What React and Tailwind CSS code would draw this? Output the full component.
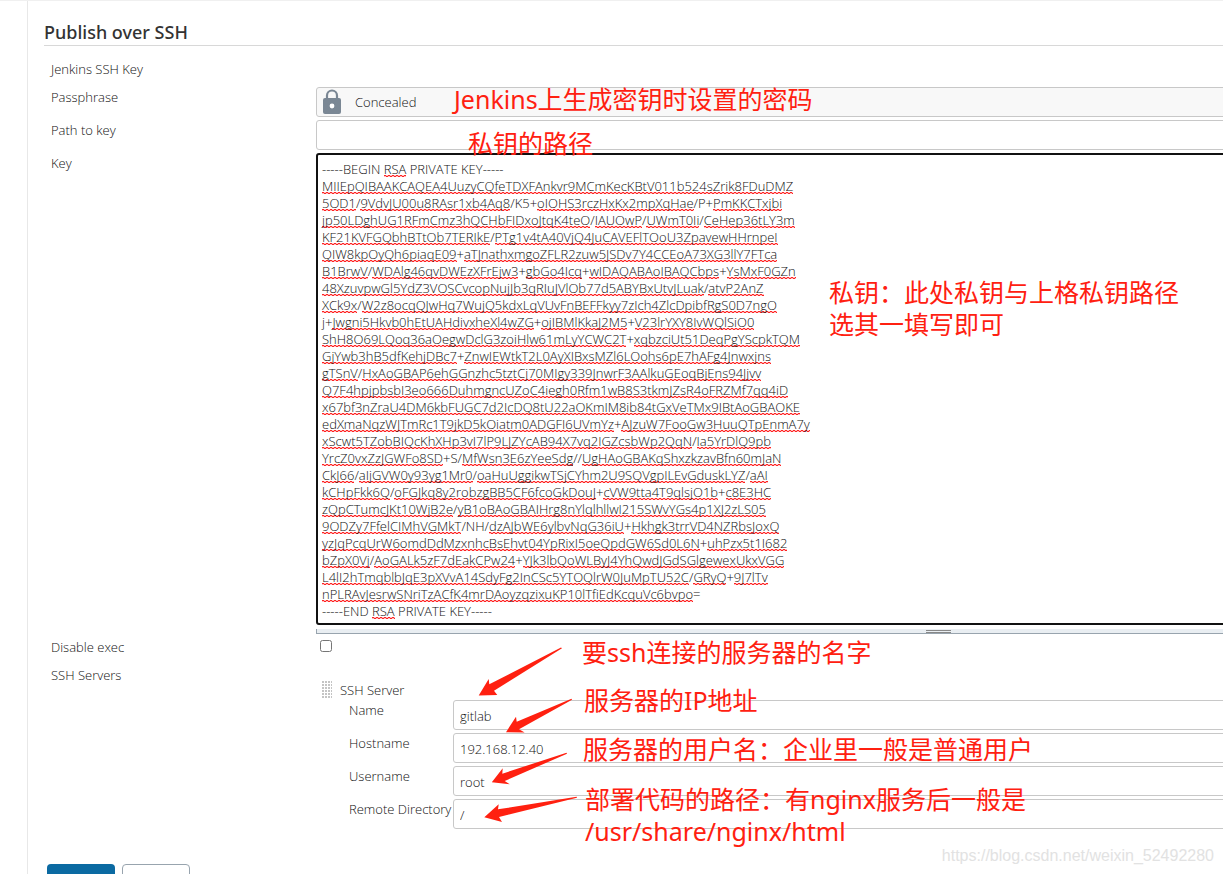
import React from "react";

const KEY_TEXT = `-----BEGIN RSA PRIVATE KEY-----
MIIEpQIBAAKCAQEA4UuzyCQfeTDXFAnkvr9MCmKecKBtV011b524sZrik8FDuDMZ
5OD1/9VdvJU00u8RAsr1xb4Aq8/K5+oIOHS3rczHxKx2mpXqHae/P+PmKKCTxjbi
jp50LDghUG1RFmCmz3hQCHbFIDxoJtqK4teO/IAUOwP/UWmT0Ii/CeHep36tLY3m
KF21KVFGQbhBTtOb7TERIkE/PTg1v4tA40VjQ4JuCAVEFlTOoU3ZpavewHHrnpeI
QIW8kpOyQh6piaqE09+aTJnathxmgoZFLR2zuw5JSDv7Y4CCEoA73XG3llY7FTca
B1BrwV/WDAlg46qvDWEzXFrEjw3+gbGo4Icq+wIDAQABAoIBAQCbps+YsMxF0GZn
48XzuvpwGl5YdZ3VOSCvcopNujJb3qRIuJVlOb77d5ABYBxUtvJLuak/atvP2AnZ
XCk9x/W2z8ocqQJwHq7WujQ5kdxLqVUvFnBEFFkyy7zIch4ZlcDpibfRgS0D7ngO
j+Jwgni5Hkvb0hEtUAHdivxheXl4wZG+ojIBMlKkaJ2M5+V23lrYXY8IvWQlSiO0
ShH8O69LQoq36aOegwDclG3zoiHlw61mLyYCWC2T+xqbzciUt51DeqPgYScpkTQM
GjYwb3hB5dfKehjDBc7+ZnwIEWtkT2L0AyXIBxsMZl6LOohs6pE7hAFg4Jnwxjns
gTSnV/HxAoGBAP6ehGGnzhc5tztCj70MIgy339JnwrF3AAlkuGEoqBjEns94Jjvv
Q7F4hpjpbsbI3eo666DuhmgncUZoC4iegh0Rfm1wB8S3tkmJZsR4oFRZMf7qq4iD
x67bf3nZraU4DM6kbFUGC7d2IcDQ8tU22aOKmIM8ib84tGxVeTMx9IBtAoGBAOKE
edXmaNqzWJTmRc1T9jkD5kOiatm0ADGFI6UVmYz+AJzuW7FooGw3HuuQTpEnmA7y
xScwt5TZobBIQcKhXHp3vI7lP9LJZYcAB94X7vq2IGZcsbWp2QqN/Ia5YrDlQ9pb
YrcZ0vxZzJGWFo8SD+S/MfWsn3E6zYeeSdg//UgHAoGBAKqShxzkzavBfn60mJaN
CkJ66/aIjGVW0y93yg1Mr0/oaHuUggikwTSjCYhm2U9SQVgpILEvGduskLYZ/aAI
kCHpFkk6Q/oFGJkq8y2robzgBB5CF6fcoGkDouJ+cVW9tta4T9qlsjO1b+c8E3HC
zQpCTumcJKt10WjB2e/yB1oBAoGBAIHrg8nYlqlhllwI215SWvYGs4p1XJ2zLS05
9ODZy7FfelCIMhVGMkT/NH/dzAJbWE6ylbvNqG36iU+Hkhgk3trrVD4NZRbsJoxQ
yzJqPcqUrW6omdDdMzxnhcBsEhvt04YpRixI5oeQpdGW6Sd0L6N+uhPzx5t1I682
bZpX0Vj/AoGALk5zF7dEakCPw24+YJk3lbQoWLByJ4YhQwdJGdSGlgewexUkxVGG
L4lI2hTmqblbJqE3pXVvA14SdyFg2InCSc5YTOQlrW0JuMpTU52C/GRyQ+9J7lTv
nPLRAvJesrwSNriTzACfK4mrDAoyzqzixuKP10lTfiEdKcquVc6bvpo=
-----END RSA PRIVATE KEY-----`;

const KNOWN_WORDS = ["BEGIN", "END", "PRIVATE", "KEY"];

const fieldClass =
  "block h-[30px] w-full rounded-[3px] border border-[#c8c8c8] bg-white px-1.5 pt-0.5 text-[13px] font-light text-[#111] outline-none";

function MarkedLine({ line }) {
  return (
    <div className="min-h-[17px]">
      {line.split(/([-/+=\s]+)/).map((part, i) =>
        i % 2 === 0 && part.length > 2 && !KNOWN_WORDS.includes(part) ? (
          <span
            key={i}
            className="bg-[linear-gradient(90deg,#f22_50%,#fbb_50%),linear-gradient(90deg,#fbb_50%,#f22_50%)] bg-[length:4px_1px] bg-[position:0_calc(100%_-_2px),0_calc(100%_-_1px)] bg-repeat-x"
          >
            {part}
          </span>
        ) : (
          part
        )
      )}
    </div>
  );
}

/* The marked text is drawn underneath; the textarea on top takes the input. */
function KeyEditor({ id }) {
  const [value, setValue] = React.useState(KEY_TEXT);
  return (
    <div className="grid">
      <div
        aria-hidden="true"
        className="col-start-1 row-start-1 border-2 border-transparent px-1 pt-1.5 pb-[3px] leading-[17px] whitespace-pre select-none"
      >
        {value.split("\n").map((line, i) => (
          <MarkedLine key={i} line={line} />
        ))}
      </div>
      <textarea
        id={id}
        rows={27}
        spellCheck={false}
        value={value}
        onChange={(e) => setValue(e.target.value)}
        className="col-start-1 row-start-1 block resize-none overflow-hidden rounded-[3px] border-2 border-[#111] bg-transparent px-1 pt-1.5 pb-[3px] text-[13px] leading-[17px] font-light whitespace-pre text-transparent caret-[#333] outline-none"
      />
    </div>
  );
}

function Row({ label, htmlFor, className = "", children }) {
  return (
    <div className={`flex ${className}`}>
      <label htmlFor={htmlFor} className="w-[265px] shrink-0 pt-px leading-[18px]">
        {label}
      </label>
      <div className="min-w-0 flex-1">{children}</div>
    </div>
  );
}

const serverFields = [
  { id: "name", label: "Name", value: "gitlab" },
  { id: "hostname", label: "Hostname", value: "192.168.12.40" },
  { id: "username", label: "Username", value: "root" },
  { id: "remote-directory", label: "Remote Directory", value: "/" },
];

const notes = [
  { place: "left-[454px] top-[82px]", lines: ["Jenkins上生成密钥时设置的密码"] },
  { place: "left-[468px] top-[126px]", lines: ["私钥的路径"] },
  { place: "left-[829px] top-[275px]", lines: ["私钥：此处私钥与上格私钥路径", "选其一填写即可"] },
  { place: "left-[582px] top-[635px]", lines: ["要ssh连接的服务器的名字"] },
  { place: "left-[584px] top-[683px]", lines: ["服务器的IP地址"] },
  { place: "left-[583px] top-[732px]", lines: ["服务器的用户名：企业里一般是普通用户"] },
  { place: "left-[585px] top-[782px]", lines: ["部署代码的路径：有nginx服务后一般是", "/usr/share/nginx/html"] },
];

function LockIcon() {
  return (
    <svg width="20" height="26" viewBox="0 0 20 26" aria-hidden="true">
      <path d="M5 10V6.5a5 5 0 0 1 10 0V10" fill="none" stroke="#7a8794" strokeWidth="2.2" />
      <rect x="1" y="9" width="18" height="16" rx="2" fill="#7a8794" />
      <circle cx="10" cy="17" r="2.4" fill="#fff" />
    </svg>
  );
}

function DragGrip() {
  return (
    <svg width="10" height="18" viewBox="0 0 10 18" className="shrink-0" aria-hidden="true">
      <defs>
        <pattern id="grip" width="3" height="3" patternUnits="userSpaceOnUse">
          <rect width="2" height="2" fill="#c4c4c4" />
        </pattern>
      </defs>
      <rect width="10" height="18" fill="url(#grip)" />
    </svg>
  );
}

function Arrows() {
  return (
    <svg
      className="pointer-events-none absolute top-[639px] left-[470px]"
      width="120"
      height="190"
      viewBox="470 640 120 190"
      fill="#ff2010"
      aria-hidden="true"
    >
      <path d="M478.7 695.5 488.7 679 489.3 684.3 561 647.6 562 648.3 494 690.7 497.3 695Z" />
      <path d="M506 732.2 516 716.7 516.7 721.7 571.5 698.8 572 699.8 519 729.3 524.7 732.5Z" />
      <path d="M491.8 782.3 502.7 768.3 502.3 773.7 566.5 752.7 567 753.7 504.7 781 509.7 784.2Z" />
      <path d="M484.3 817.3 498.7 804.3 498 809.3 576.6 796.8 577 797.8 499 817 502 822Z" />
    </svg>
  );
}

export default function App() {
  return (
    <div className="relative flex h-screen overflow-hidden border-t border-[#f0f0f0] bg-white font-['Noto_Sans','Noto_Sans_CJK_SC',sans-serif] text-[#333]">
      <aside className="w-7 shrink-0 border-r border-[#e8e8e8]" />
      <main className="min-w-0 flex-1 pl-4">
        <form className="-mr-2" onSubmit={(e) => e.preventDefault()}>
          <h2 className="mt-[19px] border-b border-[#d8d8d8] pb-px text-lg leading-6 font-medium">
            Publish over SSH
          </h2>
          <div className="pt-[13px] pl-[7px] font-['Open_Sans',sans-serif] text-[13px] font-light text-[#111]">
            <div className="h-7 pt-px leading-[18px]">Jenkins SSH Key</div>
            <Row label="Passphrase" htmlFor="passphrase" className="mb-[3px]">
              <button
                id="passphrase"
                type="button"
                className="flex h-[30px] w-full items-center gap-[13px] rounded-[3px] border border-[#c8c8c8] bg-[#f8f8f8] px-[5px] text-left"
              >
                <LockIcon />
                <span className="pt-0.5">Concealed</span>
              </button>
            </Row>
            <Row label="Path to key" htmlFor="key-path" className="mb-[3px]">
              <input id="key-path" type="text" className={fieldClass} />
            </Row>
            <Row label="Key" htmlFor="key">
              <KeyEditor id="key" />
              <div className="mt-1 flex h-[5px] items-center border-b border-l border-[#98a4ae] bg-[#e9eef2] pl-[609px]">
                <div className="h-[3px] w-[25px] border-y border-[#888]" />
              </div>
            </Row>
            <Row label="Disable exec" htmlFor="disable-exec" className="mt-[3px] h-7">
              <input id="disable-exec" type="checkbox" className="mt-[3px] ml-1 block size-3" />
            </Row>
            <div className="flex">
              <div id="servers-label" className="w-[265px] shrink-0 pt-px leading-[18px]">
                SSH Servers
              </div>
              <div role="group" aria-labelledby="servers-label" className="min-w-0 flex-1 pt-4">
                <div className="flex h-[19px] items-start gap-2 pl-1.5 leading-[18px]">
                  <DragGrip />
                  <span>SSH Server</span>
                </div>
                <div className="flex flex-col gap-[3px] pl-[33px]">
                  {serverFields.map((f) => (
                    <div key={f.id} className="flex">
                      <label htmlFor={f.id} className="w-26 shrink-0 pt-px leading-[18px] whitespace-nowrap">
                        {f.label}
                      </label>
                      <input id={f.id} type="text" defaultValue={f.value} className={fieldClass} />
                    </div>
                  ))}
                </div>
              </div>
            </div>
          </div>
          <div className="flex gap-[7px] pt-[35px] pl-[3px]">
            <button type="submit" aria-label="Save" className="h-8 w-[68px] rounded-[4px] bg-[#0b6aa2]" />
            <button
              type="button"
              aria-label="Apply"
              className="h-8 w-[68px] rounded-[4px] border border-[#98a4ae] bg-white"
            />
          </div>
        </form>
      </main>

      <Arrows />
      {notes.map((note) => (
        <p
          key={note.lines[0]}
          className={`pointer-events-none absolute text-[25px] leading-8 whitespace-nowrap text-[#ff2010] ${note.place}`}
        >
          {note.lines.map((line) => (
            <span key={line} className="block">
              {line}
            </span>
          ))}
        </p>
      ))}
      <a
        href="https://blog.csdn.net/weixin_52492280"
        className="absolute right-[9px] bottom-2 font-['Liberation_Sans',sans-serif] text-base leading-5 text-[#e2e2e2]"
      >
        https://blog.csdn.net/weixin_52492280
      </a>
    </div>
  );
}
